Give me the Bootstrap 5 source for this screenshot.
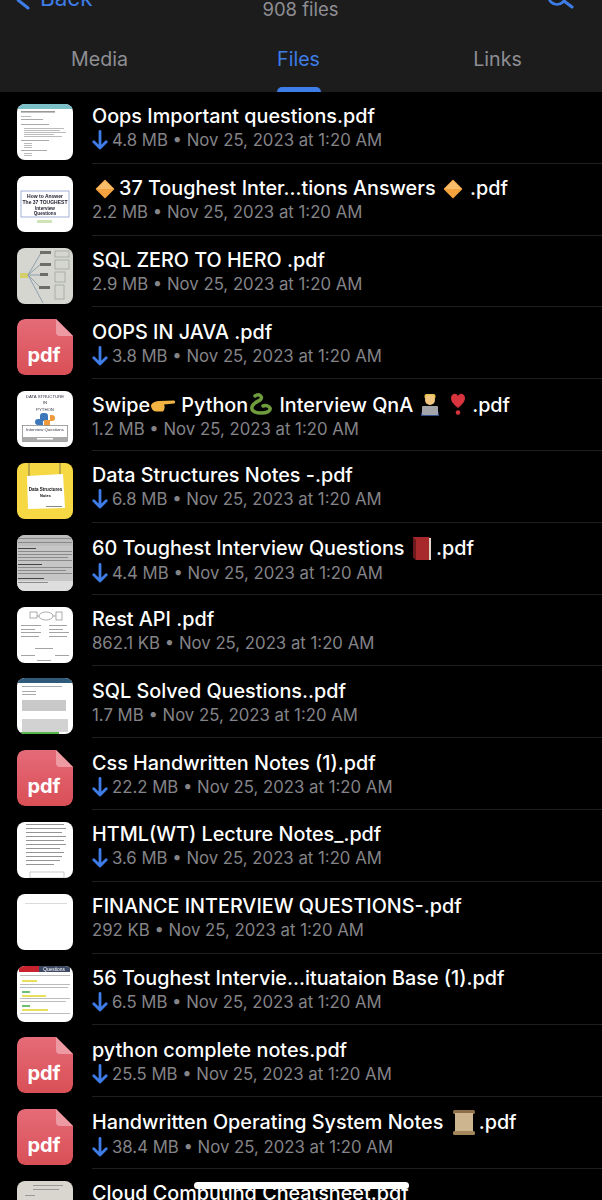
<!doctype html>
<html lang="en">
<head>
<meta charset="utf-8">
<title>Shared files</title>
<link href="https://cdn.jsdelivr.net/npm/bootstrap@5.3.0/dist/css/bootstrap.min.css" rel="stylesheet">
<style>
html,body{height:1200px;overflow:hidden;background:#000;}
body{font-family:Inter,"Liberation Sans",sans-serif;color:#fff;position:relative;}
.hdr{background:#1c1c1d;height:92px;overflow:hidden;}
.topbar{height:29px;align-items:flex-start;padding:0 12px;}
.topbar .side{width:120px;}
.back{color:#3e7de8;font-size:22.5px;line-height:24px;margin-top:-20px;margin-left:4px;gap:10px;}
.search{margin-right:16px;}
.count{color:#8e8e93;font-size:18.5px;line-height:22px;margin:-2px 5px 0 0;text-align:center;}
.tabs{height:63px;padding-right:5px;}
.tabs .nav-item{flex:1 1 0;display:flex;flex-direction:column;align-items:center;}
.tabs .nav-link{color:#8e8e93;font-size:19.6px;line-height:24px;padding:18px 0 0;height:58px;}
.tabs .active .nav-link{color:#3e7de8;}
.tabs .bar{width:44px;height:5px;background:#3e7de8;border-radius:5px 5px 0 0;}
.row-file{height:71.8px;padding:12px 0 0 17px;gap:19px;}
.thumb{width:56px;height:56px;flex:none;border-radius:8px;overflow:hidden;display:block;}
.soft{filter:blur(.35px);}
.soft text{font-family:"Liberation Sans",sans-serif;}
.info{flex:1;min-width:0;height:59.8px;border-bottom:1px solid #1f1f20;padding-top:.4px;}
.name{font-size:19.8px;line-height:24px;font-weight:500;white-space:nowrap;}
.meta{color:#848488;font-size:16.75px;line-height:24px;white-space:nowrap;display:flex;align-items:center;}
.dl{width:16px;height:20px;margin-right:4px;flex:none;}
.emo{display:inline-block;vertical-align:-4px;}
.home{position:absolute;left:194px;top:1182px;width:215px;height:7px;background:#fff;border-radius:4px;}
.list{height:1108px;overflow:hidden;}
</style>
</head>
<body>
<svg width="0" height="0" class="position-absolute">
  <defs>
    <linearGradient id="pg" x1="0" y1="0" x2="0" y2="1"><stop offset="0" stop-color="#e56b78"/><stop offset="1" stop-color="#d94f56"/></linearGradient>
    <symbol id="arrow" viewBox="0 0 16 20"><path d="M8 1.500V18M1.800 11.800L8 18l6.200-6.200" fill="none" stroke="#3e7de8" stroke-width="2.800" stroke-linecap="round" stroke-linejoin="round"/></symbol>
    <symbol id="pdf" viewBox="0 0 56 56">
      <path d="M8 0H39L56 17V48a8 8 0 0 1-8 8H8a8 8 0 0 1-8-8V8a8 8 0 0 1 8-8Z" fill="url(#pg)"/>
      <path d="M39 0L56 17H43a4 4 0 0 1-4-4Z" fill="#ee9aa3"/>
    </symbol>
    <symbol id="diamond" viewBox="0 0 20 20"><path d="M10 1.500L18.500 10 10 18.500 1.500 10Z" fill="#f3a23f" stroke="#f3a23f" stroke-width="1.500" stroke-linejoin="round"/><path d="M10 1.500L18.500 10H1.500Z" fill="#f8bd6b"/></symbol>
  </defs>
</svg>

<header class="hdr">
  <div class="topbar d-flex justify-content-between">
    <div class="side back d-flex align-items-end">
      <svg width="14" height="30" viewBox="0 0 14 30"><path d="M2 20L12 28" fill="none" stroke="#3e7de8" stroke-width="3" stroke-linecap="round"/></svg>
      <span>Back</span>
    </div>
    <div class="count">908 files</div>
    <div class="side d-flex justify-content-end">
      <svg class="search" width="30" height="10" viewBox="0 0 30 10"><circle cx="13" cy="-4" r="8.500" fill="none" stroke="#3e7de8" stroke-width="2.600"/><path d="M20 1l8 6" fill="none" stroke="#3e7de8" stroke-width="3" stroke-linecap="round"/></svg>
    </div>
  </div>
  <ul class="nav tabs">
    <li class="nav-item"><a class="nav-link" href="#">Media</a></li>
    <li class="nav-item active"><a class="nav-link" href="#">Files</a><span class="bar"></span></li>
    <li class="nav-item"><a class="nav-link" href="#">Links</a></li>
  </ul>
</header>

<main class="list">

<div class="row-file d-flex">
  <svg class="thumb soft" viewBox="0 0 56 56"><rect width="56" height="56" fill="#fff"/><rect width="56" height="5" fill="#7cc0c8"/><rect x="4" y="7" width="34" height="1.600" fill="#999"/><rect x="4" y="12" width="10" height="1" fill="#bbb"/><g fill="#aaa"><rect x="4" y="15" width="22" height="1"/><rect x="4" y="20" width="28" height="1"/><rect x="7" y="24" width="40" height=".8"/><rect x="7" y="26" width="36" height=".8"/><rect x="7" y="28" width="42" height=".8"/><rect x="7" y="30" width="30" height=".8"/><rect x="7" y="32" width="38" height=".8"/><rect x="4" y="36" width="28" height="1"/><rect x="7" y="39" width="8" height=".8"/><rect x="7" y="41" width="8" height=".8"/><rect x="7" y="43" width="8" height=".8"/><rect x="4" y="46" width="26" height="1"/><rect x="7" y="49" width="8" height=".8"/><rect x="7" y="51" width="8" height=".8"/></g></svg>
  <div class="info">
    <div class="name">Oops Important questions.pdf</div>
    <div class="meta"><svg class="dl"><use href="#arrow"/></svg>4.8 MB • Nov 25, 2023 at 1:20 AM</div>
  </div>
</div>

<div class="row-file d-flex">
  <svg class="thumb soft" viewBox="0 0 56 56"><rect width="56" height="56" fill="#fff"/><rect x="4" y="15" width="48" height="26" fill="none" stroke="#7d8fc8" stroke-width=".7"/><text x="28" y="22" font-size="5" font-weight="700" text-anchor="middle" fill="#223">How to Answer</text><text x="28" y="28" font-size="5" font-weight="700" text-anchor="middle" fill="#223">The 37 TOUGHEST</text><text x="28" y="33.500" font-size="4.600" font-weight="600" text-anchor="middle" fill="#223">Interview</text><text x="28" y="39" font-size="4.600" font-weight="600" text-anchor="middle" fill="#223">Questions</text><rect x="20" y="44" width="15" height="3" fill="#cfe3b8"/></svg>
  <div class="info">
    <div class="name"><svg class="emo" width="20" height="20" style="margin:0 4px 0 3px"><use href="#diamond"/></svg>37 Toughest Inter...tions Answers <svg class="emo" width="20" height="20" style="margin:0 2px"><use href="#diamond"/></svg> .pdf</div>
    <div class="meta">2.2 MB • Nov 25, 2023 at 1:20 AM</div>
  </div>
</div>

<div class="row-file d-flex">
  <svg class="thumb soft" viewBox="0 0 56 56"><rect width="56" height="56" fill="#d5d6cf"/><rect x="3" y="25" width="8" height="5" fill="#d4cf6a"/><g fill="none" stroke="#7d93a8" stroke-width=".8"><path d="M11 27L24 5M11 27L24 16M11 27H24M11 27L24 40M11 27L26 55"/></g><g fill="#6e6e68"><rect x="23" y="3" width="11" height="3"/><rect x="23" y="15" width="11" height="3"/><rect x="23" y="25" width="8" height="3"/><rect x="22" y="38" width="11" height="3"/></g><g fill="none" stroke="#98a098" stroke-width=".7"><rect x="38" y="3" width="14" height="6"/><rect x="38" y="12" width="14" height="9"/><rect x="38" y="24" width="10" height="10"/><rect x="38" y="37" width="9" height="14"/></g></svg>
  <div class="info">
    <div class="name">SQL ZERO TO HERO .pdf</div>
    <div class="meta">2.9 MB • Nov 25, 2023 at 1:20 AM</div>
  </div>
</div>

<div class="row-file d-flex">
  <svg class="thumb" viewBox="0 0 56 56"><use href="#pdf"/><text x="27" y="43" font-size="20" font-weight="700" text-anchor="middle" fill="#fff">pdf</text></svg>
  <div class="info">
    <div class="name">OOPS IN JAVA .pdf</div>
    <div class="meta"><svg class="dl"><use href="#arrow"/></svg>3.8 MB • Nov 25, 2023 at 1:20 AM</div>
  </div>
</div>

<div class="row-file d-flex">
  <svg class="thumb soft" viewBox="0 0 56 56"><rect width="56" height="56" fill="#fff"/><g font-size="4.300" text-anchor="middle" fill="#334"><text x="28" y="7">DATA STRUCTURE</text><text x="28" y="13">IN</text><text x="28" y="20">PYTHON</text></g><path d="M28 22h-2a3 3 0 0 0-3 3v3h-2a3 3 0 0 0 0 6h5v-4h5v-5a3 3 0 0 0-3-3Z" fill="#3d79ba"/><path d="M28 36h2a3 3 0 0 0 3-3v-3h2a3 3 0 0 0 0-6h-2v5h-6v4a3 3 0 0 0 1 3Z" fill="#ee9a3d"/><rect x="5.500" y="34.500" width="45" height="16" fill="#fff" stroke="#666" stroke-width=".6"/><text x="28" y="40" font-size="4.300" text-anchor="middle" fill="#334">Interview Questions</text><rect x="6" y="46" width="44" height="4" fill="#aaa"/><rect x="20" y="47" width="16" height="1.500" fill="#fff"/></svg>
  <div class="info">
    <div class="name">Swipe<svg class="emo" width="26" height="20" viewBox="0 0 26 20"><path d="M1 9c2-3 5-4 8-4l15-.500c1.500 0 1.500 3 0 3L14 8.500c1 1.500 1 5-1 7H6c-3 0-5-3-5-6.500Z" fill="#f2b544"/></svg> Python<svg class="emo" width="26" height="24" viewBox="0 0 26 24"><path d="M7 4c4-3 9 1 5 4-3 2-7 3-8 7-1 3 2 6 9 6 6 0 10-2 9-5-1-2-4-3-7-2" fill="none" stroke="#6f9c3c" stroke-width="3.500" stroke-linecap="round"/></svg> Interview QnA <svg class="emo" width="22" height="22" viewBox="0 0 22 22"><rect x="5.500" y="0" width="11" height="5" rx="2" fill="#e9c24f"/><circle cx="11" cy="6" r="5" fill="#f1c680"/><path d="M2 22c0-6 3-9 9-9s9 3 9 9Z" fill="#34508f"/><rect x="3" y="12" width="16" height="9" rx="1" fill="#a2a4aa"/></svg> <svg class="emo" width="18" height="24" viewBox="0 0 16 24" style="margin-left:3px"><path d="M8 16C3 12 1 9 1 6c0-4 5-6 7-2 2-4 7-2 7 2 0 3-2 6-7 10Z" fill="#d8343d"/><circle cx="8" cy="20.500" r="2.300" fill="#d8343d"/></svg> .pdf</div>
    <div class="meta">1.2 MB • Nov 25, 2023 at 1:20 AM</div>
  </div>
</div>

<div class="row-file d-flex">
  <svg class="thumb soft" viewBox="0 0 56 56"><rect width="56" height="56" fill="#f5d844"/><path d="M12 0V13M43 0V12" stroke="#554" stroke-width=".7"/><path d="M10 13L46 11 48 45 11 46Z" fill="#fff"/><text x="28.500" y="28" font-size="4.500" font-weight="700" text-anchor="middle" fill="#111">Data Structures</text><text x="28.500" y="33.500" font-size="4" font-weight="700" text-anchor="middle" fill="#111">Notes</text><rect x="29" y="43" width="16" height="1" fill="#888"/></svg>
  <div class="info">
    <div class="name">Data Structures Notes -.pdf</div>
    <div class="meta"><svg class="dl"><use href="#arrow"/></svg>6.8 MB • Nov 25, 2023 at 1:20 AM</div>
  </div>
</div>

<div class="row-file d-flex">
  <svg class="thumb soft" viewBox="0 0 56 56"><rect width="56" height="56" fill="#c6c6c6"/><rect y="0" width="56" height="11" fill="#bdbdbd"/><rect y="46" width="56" height="10" fill="#dedede"/><g fill="#444"><rect x="1" y="13" width="18" height="1"/><rect x="1" y="29" width="24" height="1"/><rect x="1" y="43" width="26" height="1"/></g><g fill="#8a8a8a"><rect x="1" y="16" width="54" height="1"/><rect x="1" y="19" width="54" height="1"/><rect x="1" y="22" width="50" height="1"/><rect x="1" y="25" width="54" height="1"/><rect x="1" y="32" width="54" height="1"/><rect x="1" y="35" width="48" height="1"/><rect x="1" y="38" width="54" height="1"/><rect x="1" y="47" width="30" height="1"/><rect x="1" y="3" width="54" height="1"/><rect x="1" y="7" width="54" height="1"/></g></svg>
  <div class="info">
    <div class="name">60 Toughest Interview Questions <svg class="emo" width="24" height="26" viewBox="0 0 22 26" style="vertical-align:-6px;margin-right:-3px"><path d="M2 2h16l2 3v20H5l-3-3Z" fill="#a8292c"/><path d="M2 22l3 3V5L2 2Z" fill="#6c1a1c"/><rect x="18" y="3" width="2" height="22" fill="#ded6c8"/></svg> .pdf</div>
    <div class="meta"><svg class="dl"><use href="#arrow"/></svg>4.4 MB • Nov 25, 2023 at 1:20 AM</div>
  </div>
</div>

<div class="row-file d-flex">
  <svg class="thumb soft" viewBox="0 0 56 56"><rect width="56" height="56" fill="#fff"/><g fill="none" stroke="#777" stroke-width=".6"><rect x="13" y="5" width="7" height="6"/><ellipse cx="29" cy="9" rx="7" ry="4"/><rect x="39" y="5" width="6" height="8"/><path d="M20 9h2M36 9h3"/></g><g fill="#999"><rect x="4" y="18" width="20" height=".9"/><rect x="4" y="22" width="14" height=".9"/><rect x="4" y="25" width="20" height=".9"/><rect x="4" y="29" width="18" height=".9"/><rect x="32" y="18" width="18" height=".9"/><rect x="32" y="22" width="14" height=".9"/><rect x="32" y="25" width="20" height=".9"/><rect x="32" y="29" width="18" height=".9"/><rect x="18" y="41" width="18" height=".9"/><rect x="4" y="48" width="14" height=".9"/><rect x="38" y="48" width="14" height=".9"/><rect x="20" y="53" width="14" height=".9"/></g></svg>
  <div class="info">
    <div class="name">Rest API .pdf</div>
    <div class="meta">862.1 KB • Nov 25, 2023 at 1:20 AM</div>
  </div>
</div>

<div class="row-file d-flex">
  <svg class="thumb soft" viewBox="0 0 56 56"><rect width="56" height="56" fill="#fff"/><rect width="56" height="5" fill="#2f5a7a"/><g fill="#aaa"><rect x="5" y="8" width="40" height="1"/><rect x="5" y="13" width="14" height="1"/><rect x="5" y="16" width="14" height="1"/></g><rect x="5" y="22" width="44" height="11" fill="#c9c9c9"/><rect x="5" y="41" width="46" height="13" fill="#d2d2d2"/><rect x="4" y="54" width="38" height="2" fill="#56b84a"/></svg>
  <div class="info">
    <div class="name">SQL Solved Questions..pdf</div>
    <div class="meta">1.7 MB • Nov 25, 2023 at 1:20 AM</div>
  </div>
</div>

<div class="row-file d-flex">
  <svg class="thumb" viewBox="0 0 56 56"><use href="#pdf"/><text x="27" y="43" font-size="20" font-weight="700" text-anchor="middle" fill="#fff">pdf</text></svg>
  <div class="info">
    <div class="name">Css Handwritten Notes (1).pdf</div>
    <div class="meta"><svg class="dl"><use href="#arrow"/></svg>22.2 MB • Nov 25, 2023 at 1:20 AM</div>
  </div>
</div>

<div class="row-file d-flex">
  <svg class="thumb soft" viewBox="0 0 56 56"><rect width="56" height="56" fill="#fff"/><g fill="#8a8a8a"><rect x="9" y="2" width="38" height=".9"/><rect x="9" y="6" width="40" height=".9"/><rect x="9" y="10" width="36" height=".9"/><rect x="9" y="14" width="40" height=".9"/><rect x="9" y="18" width="38" height=".9"/><rect x="9" y="22" width="40" height=".9"/><rect x="9" y="26" width="34" height=".9"/><rect x="9" y="30" width="38" height=".9"/><rect x="9" y="34" width="36" height=".9"/><rect x="9" y="38" width="34" height=".9"/><rect x="9" y="42" width="28" height=".9"/></g><rect x="13" y="50" width="34" height="6" fill="none" stroke="#aaa" stroke-width=".6"/></svg>
  <div class="info">
    <div class="name">HTML(WT) Lecture Notes_.pdf</div>
    <div class="meta"><svg class="dl"><use href="#arrow"/></svg>3.6 MB • Nov 25, 2023 at 1:20 AM</div>
  </div>
</div>

<div class="row-file d-flex">
  <svg class="thumb soft" viewBox="0 0 56 56"><rect width="56" height="56" fill="#fff"/><rect x="8" y="9" width="42" height=".7" fill="#ccc"/></svg>
  <div class="info">
    <div class="name">FINANCE INTERVIEW QUESTIONS-.pdf</div>
    <div class="meta">292 KB • Nov 25, 2023 at 1:20 AM</div>
  </div>
</div>

<div class="row-file d-flex">
  <svg class="thumb soft" viewBox="0 0 56 56"><rect width="56" height="56" fill="#fff"/><rect x="2" y="0" width="20" height="6" fill="#c8232c"/><rect x="22" y="0" width="31" height="6" fill="#3e4a63"/><text x="37" y="5" font-size="4.800" text-anchor="middle" fill="#fff">Questions</text><g fill="#bbb"><rect x="3" y="9" width="50" height="1"/><rect x="3" y="18" width="50" height="1"/><rect x="3" y="21" width="48" height="1"/><rect x="3" y="32" width="50" height="1"/><rect x="3" y="35" width="46" height="1"/><rect x="3" y="47" width="50" height="1"/></g><rect x="5" y="14" width="15" height="2" fill="#e8e05a"/><rect x="5" y="25" width="8" height="2" fill="#6cc070"/><rect x="5" y="29" width="24" height="2" fill="#e8e05a"/><rect x="5" y="39" width="8" height="2" fill="#6cc070"/><rect x="5" y="43" width="26" height="2" fill="#e8e05a"/></svg>
  <div class="info">
    <div class="name">56 Toughest Intervie...ituataion Base (1).pdf</div>
    <div class="meta"><svg class="dl"><use href="#arrow"/></svg>6.5 MB • Nov 25, 2023 at 1:20 AM</div>
  </div>
</div>

<div class="row-file d-flex">
  <svg class="thumb" viewBox="0 0 56 56"><use href="#pdf"/><text x="27" y="43" font-size="20" font-weight="700" text-anchor="middle" fill="#fff">pdf</text></svg>
  <div class="info">
    <div class="name">python complete notes.pdf</div>
    <div class="meta"><svg class="dl"><use href="#arrow"/></svg>25.5 MB • Nov 25, 2023 at 1:20 AM</div>
  </div>
</div>

<div class="row-file d-flex">
  <svg class="thumb" viewBox="0 0 56 56"><use href="#pdf"/><text x="27" y="43" font-size="20" font-weight="700" text-anchor="middle" fill="#fff">pdf</text></svg>
  <div class="info">
    <div class="name">Handwritten Operating System Notes <svg class="emo" width="24" height="25" viewBox="0 0 24 25" style="vertical-align:-6px;margin:0 3px"><rect x="1" y="0" width="22" height="4" rx="1.500" fill="#8c6f48"/><rect x="3" y="3" width="18" height="19" fill="#cdb68f"/><rect x="1" y="21" width="22" height="4" rx="1.500" fill="#a4875c"/></svg>.pdf</div>
    <div class="meta"><svg class="dl"><use href="#arrow"/></svg>38.4 MB • Nov 25, 2023 at 1:20 AM</div>
  </div>
</div>

<div class="row-file d-flex">
  <svg class="thumb soft" viewBox="0 0 56 56"><rect width="56" height="56" fill="#d9d6cf"/><g fill="#999"><rect x="16" y="4" width="30" height="1"/><rect x="16" y="8" width="26" height="1"/><rect x="8" y="14" width="10" height="1"/></g></svg>
  <div class="info">
    <div class="name">Cloud Computing Cheatsheet.pdf</div>
  </div>
</div>

</main>
<div class="home"></div>
<script src="https://cdn.jsdelivr.net/npm/bootstrap@5.3.0/dist/js/bootstrap.bundle.min.js"></script>
</body>
</html>
